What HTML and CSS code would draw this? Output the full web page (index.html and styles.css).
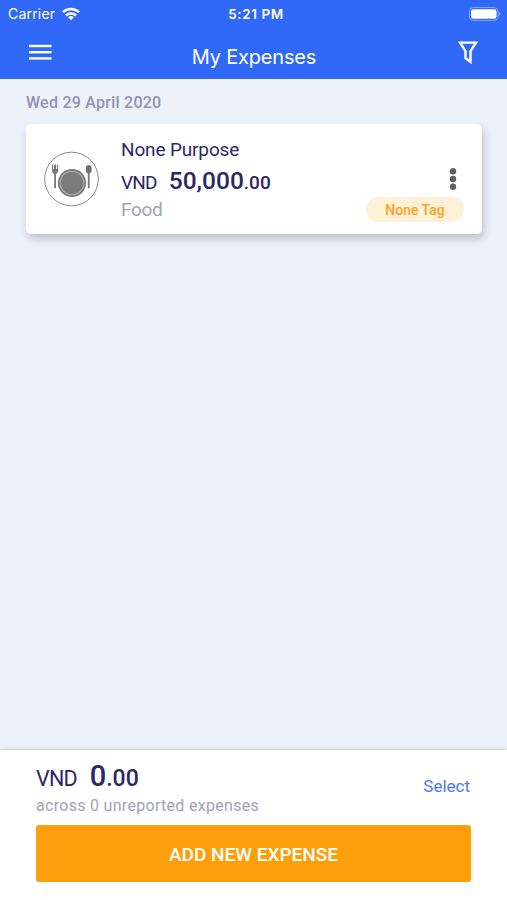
FILE: index.html
```html
<!DOCTYPE html>
<html lang="en">

<head>
  <meta charset="UTF-8">
  <meta name="viewport" content="width=device-width, initial-scale=1.0">
  <title>My Expenses</title>
  <link rel="stylesheet" href="styles.css">
</head>

<body>
  <div class="app">
    <header class="header">
      <div class="status-bar">
        <div class="carrier">
          <span class="carrier-name">Carrier</span>
          <svg class="wifi" width="18" height="14" viewBox="0 0 18 14" fill="none" stroke="#fff" stroke-width="2.5">
            <path d="M1 5.2a11.4 11.4 0 0 1 16 0" />
            <path d="M4 8.5a7.1 7.1 0 0 1 10 0" />
            <path d="M9 13.2l-2.8-2.9a4 4 0 0 1 5.6 0z" fill="#fff" stroke="none" />
          </svg>
        </div>
        <span class="time">5:21 PM</span>
        <svg class="battery" width="32" height="14" viewBox="0 0 32 14">
          <rect x=".5" y=".5" width="28.5" height="13" rx="4" fill="none" stroke="#fff" stroke-opacity=".4" />
          <rect x="2" y="2.3" width="25.5" height="9.4" rx="2.3" fill="#fff" />
          <path d="M30.3 4.8c1.6.8 1.6 3.6 0 4.4z" fill="#fff" fill-opacity=".45" />
        </svg>
      </div>
      <nav class="nav">
        <svg class="menu" width="23" height="17" viewBox="0 0 23 17" fill="#fff">
          <rect y=".8" width="22.5" height="2.4" />
          <rect y="7" width="22.5" height="2.4" />
          <rect y="13.2" width="22.5" height="2.4" />
        </svg>
        <h1 class="title">My Expenses</h1>
        <svg class="filter" width="20" height="23" viewBox="0 0 20 23" fill="none" stroke="#fff" stroke-width="2.4">
          <path d="M2 1.6h16l-5.5 8.5v10.8l-5-3.7v-7.1z" />
        </svg>
      </nav>
    </header>

    <main class="list">
      <h2 class="date">Wed 29 April 2020</h2>
      <article class="card">
        <svg class="category" width="56" height="56" viewBox="0 0 56 56">
          <circle cx="27.5" cy="28" r="26.8" fill="#fff" stroke="#888" stroke-width="1" />
          <circle cx="28" cy="32" r="14" fill="#777" />
          <circle cx="28" cy="32" r="11.8" fill="#7b7b7b" stroke="#b5b5b5" stroke-width="1.1" />
          <!-- fork -->
          <path d="M8 13.5v6c0 2 1 3 2.2 3.4V37h1.8V22.9c1.2-.4 2.2-1.4 2.2-3.4v-6h-1v4.5h-1v-4.5h-2.2v4.5h-1v-4.5z" fill="#777" />
          <!-- spoon -->
          <ellipse cx="44.7" cy="18.2" rx="3" ry="4.3" fill="#6f6f6f" />
          <rect x="43.8" y="21" width="1.8" height="16.3" fill="#777" />
        </svg>
        <div class="details">
          <div class="purpose">None Purpose</div>
          <div class="amount">
            <span class="currency">VND</span>
            <span class="value">50,000<small>.00</small></span>
          </div>
          <div class="type">Food</div>
        </div>
        <div class="actions">
          <svg class="more" width="8" height="22" viewBox="0 0 8 22" fill="#616161">
            <circle cx="4" cy="3.3" r="3.2" />
            <circle cx="4" cy="11" r="3.2" />
            <circle cx="4" cy="18.7" r="3.2" />
          </svg>
          <span class="tag">None Tag</span>
        </div>
      </article>
    </main>

    <footer class="footer">
      <div class="summary">
        <div>
          <div class="total">
            <span class="currency">VND</span>
            <span class="value">0<small>.00</small></span>
          </div>
          <div class="note">across 0 unreported expenses</div>
        </div>
        <a class="select">Select</a>
      </div>
      <button class="add-btn">ADD NEW EXPENSE</button>
    </footer>
  </div>
</body>

</html>
```
FILE: styles.css
```css
* {
  box-sizing: border-box;
}

body {
  margin: 0;
  font-family: Roboto, "Liberation Sans", sans-serif;
  color: #2d2665;
}

svg {
  display: block;
}

.app {
  display: flex;
  flex-direction: column;
  height: 900px;
  background: #edf1fa;
}

.header {
  height: 79px;
  background: #3069f8;
  color: #fff;
}

.status-bar {
  display: grid;
  grid-template-columns: 1fr auto 1fr;
  align-items: center;
  height: 27px;
  padding: 0 6px 0 8px;
  font-family: Inter, sans-serif;
}

.carrier {
  display: flex;
  align-items: center;
  gap: 7px;
}

.carrier-name {
  font-size: 14px;
  letter-spacing: 0.2px;
}

.time {
  margin-left: 3px;
  font-size: 13.5px;
  font-weight: 600;
  letter-spacing: 0.6px;
}

.battery {
  justify-self: end;
}

.nav {
  display: flex;
  align-items: center;
  justify-content: space-between;
  height: 50px;
  padding: 0 29px;
}

.title {
  margin: 9px 2px 0 0;
  font-family: Inter, sans-serif;
  font-size: 20px;
  font-weight: 400;
  letter-spacing: -0.2px;
}

.list {
  flex: 1;
  padding: 0 25px 0 26px;
}

.date {
  height: 45px;
  margin: 0;
  font-size: 16px;
  font-weight: 500;
  line-height: 47px;
  letter-spacing: 0.25px;
  color: #9291b1;
}

.card {
  display: flex;
  height: 110px;
  padding: 0 18px;
  background: #fff;
  border-radius: 5px;
  box-shadow: 2px 5px 9px rgba(80, 85, 100, 0.3);
}

.category {
  margin-top: 27px;
}

.details {
  flex: 1;
  padding: 11px 0 0 21px;
}

.purpose {
  font-size: 19px;
  line-height: 30px;
  letter-spacing: -0.15px;
}

.amount {
  display: flex;
  align-items: baseline;
  gap: 12px;
  height: 32px;
  line-height: 32px;
}

.currency {
  font-size: 19px;
  letter-spacing: -0.8px;
}

.value {
  font-size: 24.5px;
  font-weight: 500;
}

.value small {
  font-size: 19px;
}

.type {
  font-size: 19px;
  line-height: 26px;
  letter-spacing: -0.3px;
  color: #a3a1b9;
}

.actions {
  display: flex;
  flex-direction: column;
  align-items: flex-end;
}

.more {
  margin: 44px 7px 7px 0;
}

.tag {
  width: 98px;
  height: 25px;
  border-radius: 13px;
  background: #fff0d8;
  color: #fba51c;
  font-size: 14px;
  font-weight: 500;
  line-height: 26px;
  text-align: center;
}

.footer {
  height: 150px;
  padding: 9px 36px 0;
  background: #fff;
  box-shadow: 0 -1px 3px rgba(80, 85, 100, 0.22);
}

.summary {
  display: flex;
  justify-content: space-between;
  height: 66px;
}

.total {
  display: flex;
  align-items: baseline;
  gap: 13px;
  height: 36px;
  line-height: 34px;
}

.total .currency {
  font-size: 21.5px;
}

.total .value {
  font-size: 29px;
}

.total .value small {
  font-size: 23px;
}

.note {
  font-size: 16px;
  line-height: 21px;
  letter-spacing: 0.3px;
  color: #a3a1b9;
}

.select {
  margin: 16px 1px 0 0;
  font-size: 17px;
  line-height: 22px;
  color: #4a7af0;
}

.add-btn {
  display: block;
  width: 435px;
  height: 57px;
  padding: 2px 0 0;
  border: 0;
  border-radius: 3px;
  background: #fd9f0b;
  color: #fff;
  font-family: inherit;
  font-size: 19px;
  font-weight: 500;
}
```
